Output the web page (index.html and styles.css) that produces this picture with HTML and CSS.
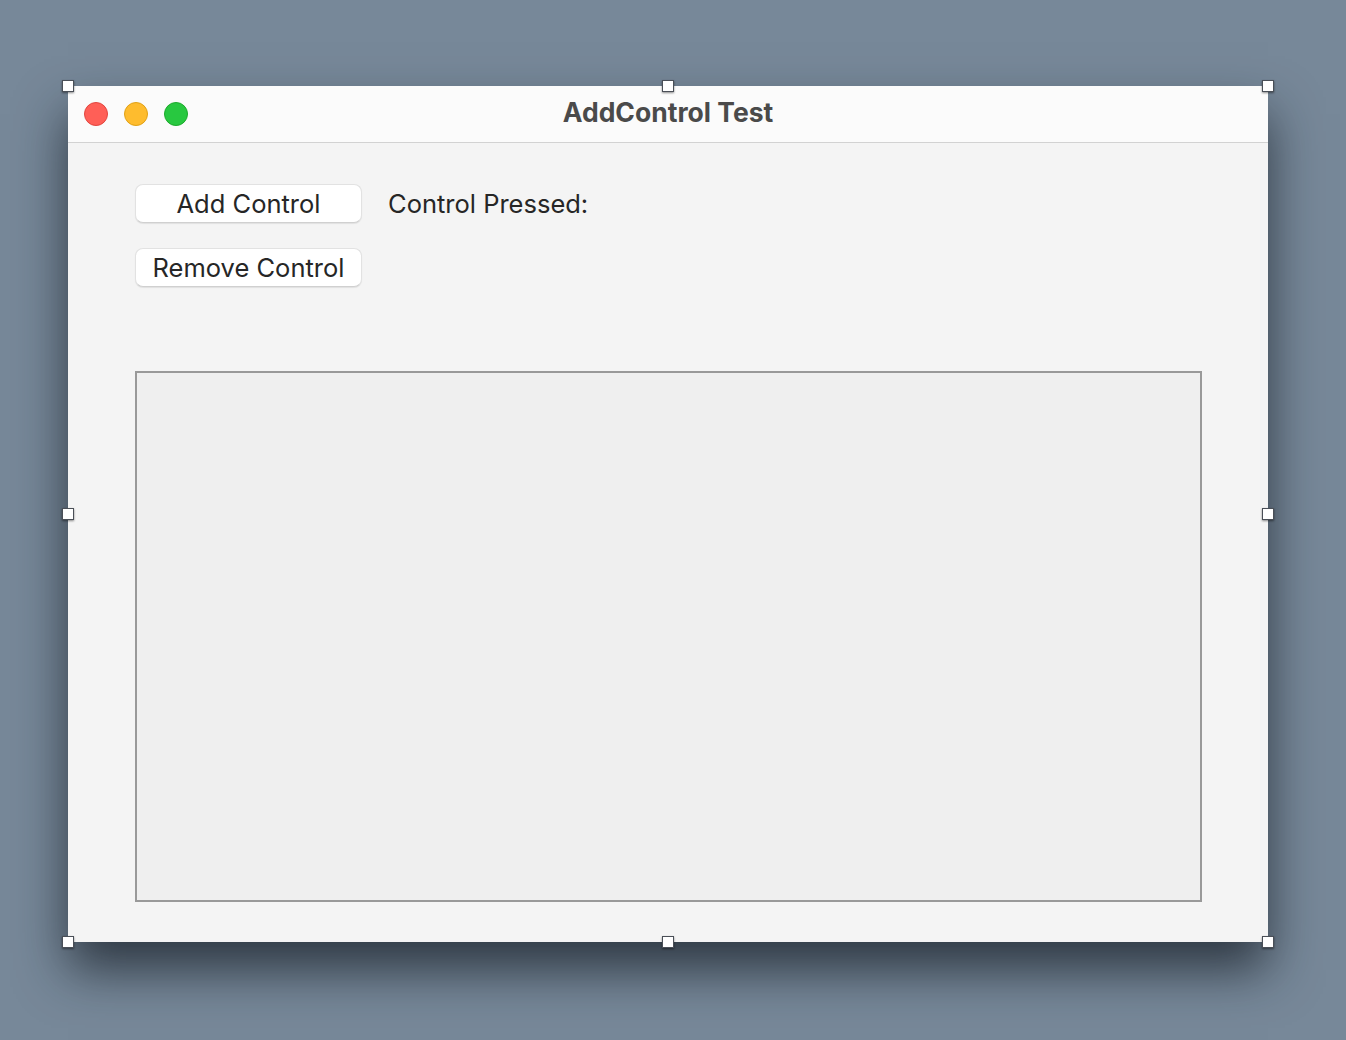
FILE: index.html
```html
<!DOCTYPE html>
<html lang="en">
	<head>
		<meta charset="utf-8">
		<title>AddControl Test</title>
		<link rel="stylesheet" href="styles.css">
	</head>
	<body>
		<div class="window">
			<div class="titlebar">
				<div class="lights">
					<span class="light red"></span>
					<span class="light yellow"></span>
					<span class="light green"></span>
				</div>
				<div class="title">AddControl Test</div>
			</div>
			<div class="content">
				<div class="row">
					<button class="btn">Add Control</button>
					<span class="label">Control Pressed:</span>
				</div>
				<div class="row">
					<button class="btn">Remove Control</button>
				</div>
				<div class="canvas"></div>
			</div>
			<!-- selection handles -->
			<span class="handle tl"></span>
			<span class="handle tc"></span>
			<span class="handle tr"></span>
			<span class="handle ml"></span>
			<span class="handle mr"></span>
			<span class="handle bl"></span>
			<span class="handle bc"></span>
			<span class="handle br"></span>
		</div>
	</body>
</html>
```

FILE: styles.css
```css
* {
	box-sizing: border-box;
}
html, body {
	margin: 0;
	height: 100%;
}
body {
	background-color: #778899;
	font-family: 'Inter', 'Noto Sans', sans-serif;
	padding: 86px 0 0 68px;
	overflow: hidden;
}
.window {
	position: relative;
	width: 1200px;
	height: 856px;
	background-color: #f4f4f4;
	box-shadow: 0 28px 48px rgba(20, 26, 34, 0.72);
	display: flex;
	flex-direction: column;
}
.titlebar {
	height: 57px;
	background-color: #fbfbfb;
	border-bottom: 1px solid #d2d2d2;
	display: flex;
	align-items: center;
	position: relative;
}
.lights {
	display: flex;
	gap: 16px;
	padding-left: 16px;
}
.light {
	width: 24px;
	height: 24px;
	border-radius: 50%;
	display: block;
}
.light.red {
	background-color: #ff5f57;
	border: 1px solid #e2463f;
}
.light.yellow {
	background-color: #febc2e;
	border: 1px solid #e1a116;
}
.light.green {
	background-color: #28c840;
	border: 1px solid #1daa2c;
}
.title {
	position: absolute;
	left: 0;
	right: 0;
	text-align: center;
	font-weight: 700;
	font-size: 26.5px;
	color: #4a4a4a;
	top: 10px;
}
.content {
	flex: 1;
	padding: 41px 66px 40px 67px;
	display: flex;
	flex-direction: column;
	gap: 25px;
}
.row {
	display: flex;
	align-items: center;
	gap: 26px;
}
.btn {
	width: 227px;
	height: 39px;
	background-color: #ffffff;
	border: 1px solid #e2e2e2;
	border-bottom-color: #d0d0d0;
	border-radius: 8px;
	box-shadow: 0 1px 1px rgba(0, 0, 0, 0.08);
	font-family: inherit;
	font-size: 25.5px;
	color: #262626;
	padding: 0;
}
.label {
	font-size: 25.5px;
	color: #262626;
}
.canvas {
	margin-top: 59px;
	height: 531px;
	border: 2px solid #999999;
	background-color: #efefef;
}
.handle {
	position: absolute;
	width: 12px;
	height: 12px;
	background-color: #ffffff;
	border: 1px solid #4a4f57;
	box-shadow: 0 1px 2px rgba(0, 0, 0, 0.45);
	margin: -6px 0 0 -6px;
}
.tl { left: 0; top: 0; }
.tc { left: 600px; top: 0; }
.tr { left: 1200px; top: 0; }
.ml { left: 0; top: 428px; }
.mr { left: 1200px; top: 428px; }
.bl { left: 0; top: 856px; }
.bc { left: 600px; top: 856px; }
.br { left: 1200px; top: 856px; }
```
